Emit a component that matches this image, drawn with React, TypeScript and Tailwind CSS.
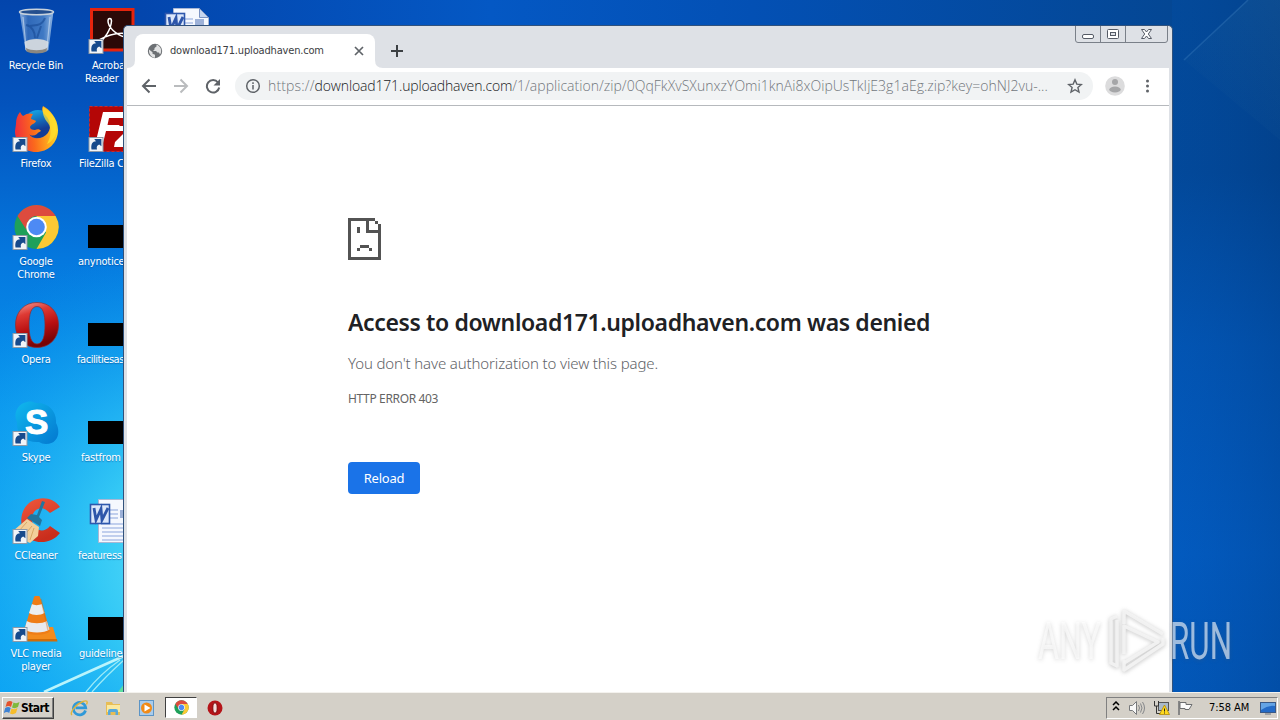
import type { ReactNode } from 'react'

const PAGE_FONT = "font-['Noto_Sans',sans-serif]"

function ShortcutArrow() {
  return (
    <g>
      <rect x="1" y="31.5" width="14" height="14" fill="#f1f4f8" stroke="#8e9aa8" />
      <path d="M3.500 43.500c-.8-5.500 1-8 4.500-8.200l-1.800-2.200h7.200v7.200l-2.200-1.900c-2 .6-3 2.500-2.200 5.100z" fill="#174a8c" />
    </g>
  )
}

function IconFrame({ children, shortcut = true }: { children: ReactNode; shortcut?: boolean }) {
  return (
    <svg width="48" height="48" viewBox="0 0 48 48" className="block shrink-0 [text-shadow:none]">
      {children}
      {shortcut && <ShortcutArrow />}
    </svg>
  )
}

function RecycleBinIcon() {
  return (
    <IconFrame shortcut={false}>
      <defs>
        <linearGradient id="bin" x2="1">
          <stop offset="0" stopColor="#8db2e2" />
          <stop offset=".25" stopColor="#2f68b8" />
          <stop offset=".7" stopColor="#3f79c4" />
          <stop offset="1" stopColor="#8fb5e2" />
        </linearGradient>
      </defs>
      <path d="M7.500 3h34l-5 39c-3 3.500-20 3.500-23 0z" fill="url(#bin)" />
      <path d="M12.500 34c5-4 19-4 24 0l-1 8c-3 3-19 3-22 0z" fill="#ccd4dd" />
      <path d="M14 40c5 3 16 3 21 0l-.5 3.500c-4 2.500-16 2.500-20 0z" fill="#8b8780" />
      <path d="M14 17c6 1 9 7 9 13M33 10c-3 8-9 7-15 8M29 18l-4 12" fill="none" stroke="#174a95" strokeWidth="2" opacity=".6" />
      <path d="M11 9l3 30M38 9l-3 30" stroke="#d2e2f4" strokeWidth="1.200" opacity=".6" />
      <ellipse cx="24.500" cy="4" rx="17" ry="2.800" fill="#244f8e" stroke="#c8d2dc" strokeWidth="1.500" />
    </IconFrame>
  )
}

function FirefoxIcon() {
  return (
    <IconFrame>
      <defs>
        <linearGradient id="fox" x1="0" y1=".3" x2="1" y2=".2">
          <stop offset="0" stopColor="#f0303c" />
          <stop offset=".4" stopColor="#fb6a1c" />
          <stop offset=".8" stopColor="#ffb81f" />
          <stop offset="1" stopColor="#ffe62c" />
        </linearGradient>
        <linearGradient id="globe" x2=".3" y2="1">
          <stop offset="0" stopColor="#14b4f0" />
          <stop offset=".8" stopColor="#143c96" />
        </linearGradient>
      </defs>
      <circle cx="26" cy="18" r="14" fill="url(#globe)" />
      <path
        d="M4 18c0-5 1-8 4-12 1 2 2 3 3 4 4-3 7-3 10-2-1 2-2 3-2 5 2 1 4 1 5 2-1 3-5 3-6 6 0 2 2 3 5 3 2-1 5-1 6 1-1 1-3 1-4 3-3 2-6 2-8 0 3 5 9 5 14 3 8-4 9-13 4-20-4-4-6-7-4-11C37 3 46 12 46 24c0 13-10 22-22 22C12 46 3 37 3 25z"
        fill="url(#fox)"
      />
      <path d="M31 1c9 5 15 14 13 25-1 6-5 10-9 12 4-7 5-15 1-21-4-5-6-9-5-16z" fill="#ffe22e" opacity=".75" />
    </IconFrame>
  )
}

function ChromeGlyph() {
  return (
    <>
      <circle cx="24.500" cy="23" r="22" fill="#1ea05a" />
      <path d="M24.500 12h19.100A22 22 0 0 1 24.500 45l9.500-16.500z" fill="#fcc934" />
      <path d="M5.500 12A22 22 0 0 1 43.600 12H24.500c-6 0-10 5-10 14z" fill="#dd4b3e" />
      <circle cx="24.500" cy="23" r="10.300" fill="#fff" />
      <circle cx="24.500" cy="23" r="8.300" fill="#4d8af4" />
    </>
  )
}

function OperaIcon() {
  return (
    <IconFrame>
      <defs>
        <linearGradient id="opera" x2=".3" y2="1">
          <stop offset="0" stopColor="#f4a39c" />
          <stop offset=".3" stopColor="#de3a34" />
          <stop offset=".65" stopColor="#b80f10" />
          <stop offset="1" stopColor="#780405" />
        </linearGradient>
      </defs>
      <path
        d="M25 .5C38 .5 46.500 10 46.500 23S38 45.500 25 45.500 3.500 36 3.500 23 12 .5 25 .5zm0 4c-6 0-8 8-8 18.500s2 19 8 19 8-8.500 8-19-2-18.500-8-18.500z"
        fill="url(#opera)"
        stroke="#8d2b31"
        strokeWidth=".7"
        fillRule="evenodd"
      />
    </IconFrame>
  )
}

function SkypeIcon() {
  return (
    <IconFrame>
      <defs>
        <linearGradient id="skype" x2="1" y2="1">
          <stop offset="0" stopColor="#10b8ee" />
          <stop offset="1" stopColor="#0378d0" />
        </linearGradient>
      </defs>
      <path d="M15 2c4-1 6 0 9 1 12-1 21 8 20 20 5 9 2 21-10 21-3 0-5-1-7-2C14 43 4 35 5 22 1 14 5 4 15 2z" fill="url(#skype)" />
      <text x="24.500" y="34" textAnchor="middle" fontFamily="Liberation Sans, sans-serif" fontWeight="700" fontSize="35" fill="#fff" stroke="#fff">
        S
      </text>
    </IconFrame>
  )
}

function CCleanerIcon() {
  return (
    <IconFrame>
      <defs>
        <linearGradient id="ccl" x2=".4" y2="1">
          <stop offset="0" stopColor="#f0583d" />
          <stop offset="1" stopColor="#c92d1c" />
        </linearGradient>
      </defs>
      <path d="M48 9C42 0 30-2 20 3 6 11 6 32 18 41c10 6 23 3 30-6l-10-7c-4 5-10 6-14 2-6-5-5-14 0-18 5-3 9-2 14 3z" fill="url(#ccl)" />
      <path d="M15 21l12 8-1 9-8 7-9-4-8-8z" fill="#f2cf9a" />
      <path d="M6 34l9-10M11 39l9-11M18 42l4-12" stroke="#d9a763" strokeWidth="1" />
      <path d="M30 3l3 1-6 15 3 3-2 6-13-8 4-4 6 1z" fill="#21769f" />
    </IconFrame>
  )
}

function VlcIcon() {
  return (
    <IconFrame>
      <path d="M10 31h31l4 14H5z" fill="#f38b1c" />
      <path d="M5 43h40l.5 2.500H5z" fill="#d06c08" />
      <path d="M22 1c1-2 5-2 6 0l10 34c-3 5-23 5-26 0z" fill="#ef7d16" />
      <path d="M20 8c2 1.500 7 1.500 9.700 0l2.800 9c-4 2.500-12 2.500-15.500 0z" fill="#eceef0" />
      <path d="M14.800 25c5 3 15.500 3 20 0l2.700 8.500c-5 4-20 4-25 0z" fill="#e8eaed" />
      <path d="M29 3l7 31" stroke="#c86207" strokeWidth="1.500" opacity=".35" />
    </IconFrame>
  )
}

function AcrobatIcon() {
  return (
    <IconFrame>
      <rect x="3.500" y="1.500" width="41.500" height="40.500" fill="#2b0907" stroke="#e5240d" strokeWidth="3" />
      <path
        d="M10 36c7-5 13-15 13.500-23 0-3.500-3.500-3.500-3.500 0 0 6 8 14 17 16 4 .5 4-3 0-3.500-9-1-18 2-26 6.500-3 1.500-3 4-1 4z"
        fill="none"
        stroke="#fff"
        strokeWidth="1.500"
      />
    </IconFrame>
  )
}

function FileZillaIcon() {
  return (
    <IconFrame>
      <rect x="1.500" y=".5" width="45" height="45" fill="#b40606" stroke="#d12724" strokeDasharray="3 2" />
      <path d="M15 6h26l-1.500 6H21l-1.500 7h12l-1.500 6H18l-3.500 14H7z" fill="#fff" />
      <path d="M30 20h17l-1 5-11 11h10l-1 5H26l1-5 11-11h-9z" fill="#fff" />
    </IconFrame>
  )
}

function BlackIcon() {
  return (
    <IconFrame shortcut={false}>
      <rect y="21" width="48" height="23" fill="#000" />
    </IconFrame>
  )
}

function WordIcon() {
  return (
    <IconFrame shortcut={false}>
      <path d="M10.500 1.500h26l9 9v34h-35z" fill="#f5f8fe" stroke="#a9b7d4" />
      <path d="M36.500 1.500v9h9z" fill="#c6d5ee" stroke="#7b93c2" />
      <path d="M22 12h8M22 16h8M22 20h8M14 26h29M14 30h29M14 34h29M14 38h29M14 42h29" stroke="#8ba5dc" />
      <rect x="32" y="12" width="9" height="8" fill="#9db1d8" />
      <rect x="2.500" y="6.500" width="19" height="19" fill="#dce7fa" stroke="#2e58ad" strokeWidth="1.600" />
      <path d="M6 10l2 12 5-11 1 11 6-12" fill="none" stroke="#2e56aa" strokeWidth="2.800" />
    </IconFrame>
  )
}

const leftColumn = [
  { label: ['Recycle Bin'], icon: <RecycleBinIcon /> },
  { label: ['Firefox'], icon: <FirefoxIcon /> },
  { label: ['Google', 'Chrome'], icon: <IconFrame><ChromeGlyph /></IconFrame> },
  { label: ['Opera'], icon: <OperaIcon /> },
  { label: ['Skype'], icon: <SkypeIcon /> },
  { label: ['CCleaner'], icon: <CCleanerIcon /> },
  { label: ['VLC media', 'player'], icon: <VlcIcon /> },
]

const rightColumn = [
  { label: ['Acroba', 'Reader'], indent: ['pl-[20px]', 'pl-[13px]'], icon: <AcrobatIcon /> },
  { label: ['FileZilla C'], indent: ['pl-[7px]'], icon: <FileZillaIcon /> },
  { label: ['anynotice'], indent: ['pl-[6px]'], icon: <BlackIcon /> },
  { label: ['facilitiesas'], indent: ['pl-[5px] tracking-[-0.45px]'], icon: <BlackIcon /> },
  { label: ['fastfrom'], indent: ['pl-[9px]'], icon: <BlackIcon /> },
  { label: ['featuress'], indent: ['pl-[6px]'], icon: <WordIcon /> },
  { label: ['guideline'], indent: ['pl-[7px]'], icon: <BlackIcon /> },
]

function Wallpaper() {
  return (
    <svg width="1280" height="692" className="absolute inset-0">
      <defs>
        <linearGradient id="leftSky" x1="0" y1="0" x2="0" y2="1">
          <stop offset="0" stopColor="#0345ac" />
          <stop offset=".15" stopColor="#0353bd" />
          <stop offset=".38" stopColor="#0579df" />
          <stop offset=".6" stopColor="#0895ee" />
          <stop offset="1" stopColor="#06a0f4" />
        </linearGradient>
        <radialGradient id="glow" gradientUnits="userSpaceOnUse" cx="210" cy="560" r="330">
          <stop offset="0" stopColor="#6ae7fb" />
          <stop offset=".35" stopColor="#3bd0f6" stopOpacity=".85" />
          <stop offset="1" stopColor="#0a9bf0" stopOpacity="0" />
        </radialGradient>
        <linearGradient id="rightSky" x1="0" y1="0" x2="0" y2="1">
          <stop offset="0" stopColor="#04448f" />
          <stop offset=".25" stopColor="#03438f" />
          <stop offset=".5" stopColor="#0352ae" />
          <stop offset=".8" stopColor="#0359bd" />
          <stop offset="1" stopColor="#0355b4" />
        </linearGradient>
        <linearGradient id="rightShade" gradientUnits="userSpaceOnUse" x1="1172" y1="0" x2="1280" y2="0">
          <stop offset="0" stopColor="#0060c8" stopOpacity=".2" />
          <stop offset="1" stopColor="#003e88" stopOpacity=".3" />
        </linearGradient>
        <linearGradient id="topSky" x2="1">
          <stop offset="0" stopColor="#0345ac" />
          <stop offset=".35" stopColor="#0458c4" />
          <stop offset=".6" stopColor="#0350b4" />
          <stop offset="1" stopColor="#044794" />
        </linearGradient>
        <linearGradient id="beam" x1="1" y1="0" x2=".4" y2="1">
          <stop offset="0" stopColor="#2a6a9c" stopOpacity=".25" />
          <stop offset="1" stopColor="#2a6a9c" stopOpacity="0" />
        </linearGradient>
      </defs>
      <rect width="640" height="692" fill="url(#leftSky)" />
      <rect width="640" height="692" fill="url(#glow)" />
      <rect x="640" width="640" height="692" fill="url(#rightSky)" />
      <rect x="1172" width="108" height="692" fill="url(#rightShade)" />
      <rect x="124" width="1048" height="30" fill="url(#topSky)" />
      <path d="M1184 60L1248 0h32v140z" fill="url(#beam)" />
      <path d="M1184 60L1248 0" stroke="#4a8ac6" strokeWidth="1.500" opacity=".3" />
      <path d="M44 692q35-16 80-36" fill="none" stroke="#b9f4fc" strokeWidth="2.500" />
      <path d="M86 692q14-18 34-32M92 692q14-16 32-32" fill="none" stroke="#9cebf8" strokeWidth="1.300" />
      <path d="M118 692l6-8v8z" fill="#5de0a0" />
    </svg>
  )
}

function DesktopIcons() {
  return (
    <div className="relative flex text-[11px] leading-[13px] text-white font-['DejaVu_Sans_Condensed','Noto_Sans',sans-serif] tracking-[-0.25px] [text-shadow:0_1px_1px_#00408a80]">
      <div className="w-[72px]">
        {leftColumn.map((item) => (
          <div key={item.label[0]} className="flex h-[98px] flex-col items-center pt-[8px]">
            {item.icon}
            <div className="mt-[3px] text-center whitespace-nowrap">
              {item.label.map((line) => (
                <div key={line}>{line}</div>
              ))}
            </div>
          </div>
        ))}
      </div>
      <div className="w-[52px]">
        {rightColumn.map((item) => (
          <div key={item.label[0]} className="flex h-[98px] flex-col pt-[8px]">
            <div className="pl-[16px]">{item.icon}</div>
            <div className="mt-[3px] whitespace-nowrap">
              {item.label.map((line, i) => (
                <div key={line} className={item.indent[i]}>
                  {line}
                </div>
              ))}
            </div>
          </div>
        ))}
      </div>
      <div className="pt-[7px] pl-[39px]">
        <WordIcon />
      </div>
    </div>
  )
}

function CaptionButtons() {
  return (
    <svg width="94" height="18" viewBox="0 0 94 18" className="shrink-0 self-start" fill="none">
      <path d="M.5 0v14q0 2.500 2.500 2.500h87q2.500 0 2.500-2.500V0M25.500 0v16M50.500 0v16" stroke="#7a8089" />
      <rect x="7.500" y="8.500" width="11" height="4" rx="1.500" fill="#fff" stroke="#555b66" />
      <rect x="32.500" y="3.500" width="11" height="9" rx="1" fill="#fff" stroke="#555b66" />
      <rect x="35.500" y="6.500" width="5" height="3" fill="#dee1e6" stroke="#555b66" />
      <path d="M66.500 3.500h3l2 2.500 2-2.500h3l-3.200 4.500 3.200 4.500h-3l-2-2.500-2 2.500h-3l3.200-4.500z" fill="#fff" stroke="#555b66" />
    </svg>
  )
}

function TabStrip() {
  return (
    <div className="flex h-[42px] items-end bg-[#dee1e6]">
      <svg width="8" height="8" className="shrink-0">
        <path d="M8 0v8H0q8 0 8-8z" fill="#fff" />
      </svg>
      <div className="flex h-[34px] w-[240px] items-center rounded-t-[8px] bg-white pr-[10px] pl-[12px]">
        <svg width="16" height="16" viewBox="0 0 16 16">
          <circle cx="8" cy="8" r="7.200" fill="#6c7074" />
          <path d="M2 6.500l3.500 2.700v1.500l2.500 1v3C4.500 14.500 1.500 11 2 6.500zM9.500 1.500v2L7.500 5v1.500L6 8h3l1.500 1.500H12l1 2C15 9 15 4 9.500 1.500z" fill="#fff" opacity=".8" />
        </svg>
        <span className="ml-[7px] flex-1 pt-[1px] text-[11px] whitespace-nowrap text-[#3c4043] font-['DejaVu_Sans_Condensed','Noto_Sans',sans-serif] tracking-[-0.17px]">
          download171.uploadhaven.com
        </span>
        <svg width="12" height="12" viewBox="0 0 12 12">
          <path d="M2 2l8 8M10 2l-8 8" stroke="#5f6368" strokeWidth="1.700" />
        </svg>
      </div>
      <svg width="8" height="8" className="shrink-0">
        <path d="M0 0v8h8q-8 0-8-8z" fill="#fff" />
      </svg>
      <svg width="14" height="14" viewBox="0 0 14 14" className="mb-[10px] ml-[7px]">
        <path d="M7 1v12M1 7h12" stroke="#3c4043" strokeWidth="2" />
      </svg>
      <div className="flex-1" />
      <CaptionButtons />
    </div>
  )
}

function Toolbar() {
  return (
    <div className="flex h-[38px] items-center border-b border-[#b6b9bd] bg-white pb-[1px] pl-[14px]">
      <svg width="16" height="16" viewBox="0 0 16 16" fill="none" stroke="#5f6368" strokeWidth="2">
        <path d="M15 8H2.500M8.500 1.500L2 8l6.500 6.500" />
      </svg>
      <svg width="16" height="16" viewBox="0 0 16 16" fill="none" stroke="#babcbe" strokeWidth="2" className="ml-[16px]">
        <path d="M1 8h12.500M7.500 1.500L14 8l-6.500 6.500" />
      </svg>
      <svg width="16" height="16" viewBox="0 0 16 16" className="ml-[16px]">
        <path d="M13 4.500A6.200 6.200 0 1 0 14.200 9.500" fill="none" stroke="#5f6368" strokeWidth="2" />
        <path d="M15 1v6.500H8.500z" fill="#5f6368" />
      </svg>
      <div className="ml-[14px] flex h-[28px] w-[858px] items-center rounded-full bg-[#f1f3f4] pr-[10px] pl-[10px]">
        <svg width="16" height="16" viewBox="0 0 16 16">
          <circle cx="8" cy="8" r="6.300" fill="none" stroke="#5f6368" strokeWidth="1.500" />
          <path d="M8 7v4.500M8 4.300v1.600" stroke="#5f6368" strokeWidth="1.500" />
        </svg>
        <div className="ml-[7px] flex-1 pb-[1px] text-[14px] font-light whitespace-nowrap text-[#72777c] font-['Open_Sans','Noto_Sans',sans-serif]">
          <span className="tracking-[0.15px]">https://</span>
          <span className="tracking-[-0.15px] text-[#202124]">download171.uploadhaven.com</span>
          <span className="tracking-[0.03px]">/1/application/zip/0QqFkXvSXunxzYOmi1knAi8xOipUsTkIjE3g1aEg.zip?key=ohNJ2vu-...</span>
        </div>
        <svg width="16" height="16" viewBox="0 0 16 16">
          <path d="M8 1.800l1.800 4.300 4.600.4-3.500 3 1.100 4.600L8 11.700l-4 2.400 1.100-4.600-3.500-3 4.600-.4z" fill="none" stroke="#5f6368" strokeWidth="1.400" />
        </svg>
      </div>
      <svg width="20" height="20" viewBox="0 0 20 20" className="ml-[12px]">
        <circle cx="10" cy="10" r="9.800" fill="#dcdcdd" />
        <circle cx="10" cy="6" r="3" fill="#a5a6a8" />
        <ellipse cx="10" cy="13.500" rx="5.700" ry="3" fill="#a5a6a8" />
      </svg>
      <svg width="4" height="16" viewBox="0 0 4 16" fill="#5f6368" className="ml-[20px]">
        <circle cx="2.500" cy="3" r="1.500" />
        <circle cx="2.500" cy="8" r="1.500" />
        <circle cx="2.500" cy="13" r="1.500" />
      </svg>
    </div>
  )
}

function ErrorPage() {
  return (
    <div className={`flex flex-1 flex-col items-start bg-white pt-[112px] pl-[221px] ${PAGE_FONT}`}>
      <svg width="33" height="42" viewBox="0 0 11 14" fill="#535353" shapeRendering="crispEdges">
        <path d="M0 0h9v1H7v3h3V2h1v12H0zM1 1v12h9V5H6V1z" fillRule="evenodd" />
        <path d="M9 1h1v1H9zM3 3h1v2H3zM4 9h3v1H4zM3 10h1v1H3zM7 10h1v1H7z" />
      </svg>
      <h1 className="mt-[47px] text-[23px] leading-[30px] font-semibold tracking-[-0.37px] whitespace-nowrap text-[#202124]">
        Access to download171.uploadhaven.com was denied
      </h1>
      <p className="mt-[14px] text-[15px] leading-[24px] font-light tracking-[-0.13px] whitespace-nowrap text-[#5f6368]">
        You don't have authorization to view this page.
      </p>
      <p className="mt-[14px] text-[12px] leading-[20px] tracking-[-0.35px] whitespace-nowrap text-[#646464]">HTTP ERROR 403</p>
      <button className="mt-[53px] h-[32px] w-[72px] rounded-[4px] bg-[#1a73e8] pt-[1px] text-[13px] tracking-[-0.2px] text-white">Reload</button>
    </div>
  )
}

function Watermark() {
  return (
    <svg
      width="210"
      height="80"
      viewBox="0 0 210 80"
      className="absolute top-[602px] left-[1030px] overflow-visible [filter:drop-shadow(0_1px_2px_rgba(90,90,90,0.4))]"
    >
      <g fontFamily="Roboto, sans-serif" fontSize="51" fill="#fff" fillOpacity=".6">
        <text x="8" y="57" textLength="63" lengthAdjust="spacingAndGlyphs">ANY</text>
        <text x="140" y="57" textLength="62" lengthAdjust="spacingAndGlyphs">RUN</text>
      </g>
      <g fill="none" stroke="#f4f4f4" strokeOpacity=".9" strokeWidth="3.500" strokeLinejoin="round">
        <path d="M94 22V9l39 23M94 52V24l34 16-34 21M87 14l-6 3v44l6 3V18" />
        <path d="M94 58v10l39-26v-6" />
      </g>
    </svg>
  )
}

function BrowserWindow() {
  return (
    <div className="absolute top-[25px] left-[123px] flex h-[667px] w-[1050px] flex-col rounded-t-[5px] border-x border-t border-[#31527c] bg-[#dee1e6] px-[3px]">
      <TabStrip />
      <Toolbar />
      <ErrorPage />
    </div>
  )
}

function Taskbar() {
  return (
    <div className="relative flex h-[28px] items-center border-t border-[#f4f2ee] bg-[#d4d0c8] pt-[2px] pr-[2px] pl-[2px]">
      <div className="flex h-[22px] w-[52px] items-center border border-t-white border-r-[#404040] border-b-[#404040] border-l-white pl-[1px] shadow-[inset_-1px_-1px_0_#808080]">
        <svg width="17" height="17" viewBox="0 0 17 17" className="shrink-0">
          <path d="M3 3q3-2 5.500 0L7 8Q4.500 6 1.500 8z" fill="#e5532d" />
          <path d="M9.500 3.500q3 1.500 6-.5l-1.500 5q-3 2-6 .5z" fill="#7fb93c" />
          <path d="M1.200 9q3-2 5.500 0l-1.500 5Q3 12-.2 14z" fill="#3f83d4" />
          <path d="M7.500 9.500q3 1.500 6-.5L12 14q-3 2-6 .5z" fill="#f6bd2b" />
        </svg>
        <span className="text-[12px] leading-none font-bold text-black font-['DejaVu_Sans_Condensed',sans-serif] tracking-[-0.6px]">Start</span>
      </div>
      <svg width="18" height="18" viewBox="0 0 18 18" className="ml-[16px]">
        <path d="M15.500 11.500A6.200 6.200 0 1 1 15.700 8.800H5.500" fill="none" stroke="#3099d8" strokeWidth="2.700" />
        <path d="M2 16C-1 14 6 5 13 2.500c4-1.500 5 0 3.500 3" fill="none" stroke="#e0b43a" strokeWidth="1.400" />
      </svg>
      <svg width="18" height="18" viewBox="0 0 18 18" className="ml-[16px]">
        <path d="M2 3h6l1 2h7v11H2z" fill="#e7bd55" />
        <path d="M3 6h13v7H3z" fill="#fbe9a0" />
        <path d="M4 16V12q0-2 2-2h6q2 0 2 2v4h-2.500v-3h-5v3z" fill="#58a9d9" />
      </svg>
      <svg width="18" height="18" viewBox="0 0 18 18" className="ml-[16px]">
        <rect x="1.500" y="1.500" width="14" height="15" fill="#a9ccec" stroke="#5b94c6" />
        <circle cx="8.500" cy="9" r="5.500" fill="#f18a16" />
        <path d="M6.500 5.500v7l6-3.500z" fill="#fff" />
      </svg>
      <div className="ml-[9px] flex h-[21px] w-[32px] items-center justify-center border border-t-[#404040] border-r-white border-b-white border-l-[#404040] bg-white">
        <svg width="15" height="15" viewBox="2 0 45 46">
          <ChromeGlyph />
        </svg>
      </div>
      <svg width="16" height="16" viewBox="0 0 16 16" className="ml-[10px]">
        <circle cx="8" cy="8" r="7.500" fill="#b51419" />
        <ellipse cx="8" cy="8" rx="2.200" ry="5.200" fill="#f4dedd" stroke="#7e090c" />
      </svg>
      <div className="flex-1" />
      <div className="flex h-[22px] w-[172px] items-center border border-t-[#808080] border-r-white border-b-white border-l-[#808080] pl-[5px]">
        <svg width="8" height="10" viewBox="0 0 8 10" fill="none" stroke="#000" strokeWidth="1.500" className="mb-[3px]">
          <path d="M1 4l3-3 3 3M1 9l3-3 3 3" />
        </svg>
        <svg width="18" height="16" viewBox="0 0 18 16" className="ml-[8px]" fill="none">
          <path d="M1.500 5.500h3l4-4v13l-4-4h-3z" fill="#f8f8f8" stroke="#77797c" />
          <path d="M10.500 5q2 3 0 6M12.500 3.500q3 4.500 0 9M14.500 2q4 6 0 12" stroke="#85878a" />
        </svg>
        <svg width="18" height="16" viewBox="0 0 18 16" className="ml-[7px]">
          <rect x="5.500" y="2.500" width="10" height="8" fill="#a9b9c9" stroke="#555" />
          <path d="M1.500 1v5h4V1M3.500 6v7.500h5" fill="none" stroke="#333" />
          <path d="M11.500 5l5 9.500h-10z" fill="#ffd91c" stroke="#b28a05" strokeWidth=".8" />
          <path d="M11.500 8.500v3M11.500 12.500v1" stroke="#222" />
        </svg>
        <svg width="17" height="16" viewBox="0 0 17 16" className="ml-[6px]">
          <path d="M2 1v14" stroke="#6c6e70" strokeWidth="1.500" />
          <path d="M3 2.500h6v2h6l-3 5H8v-1H3z" fill="#fbfbfb" stroke="#6c6e70" />
        </svg>
        <span className="ml-[15px] text-[11px] leading-none whitespace-nowrap text-black font-['DejaVu_Sans_Condensed','Noto_Sans',sans-serif] tracking-[-0.05px]">7:58 AM</span>
        <svg width="16" height="14" viewBox="0 0 16 14" className="ml-auto mr-[1px]">
          <rect x=".5" y="1.500" width="15" height="10" fill="#246bc7" stroke="#395987" />
          <path d="M1 2h14v3Q8 4 1 9z" fill="#64a4e5" />
          <path d="M5 13h6" stroke="#6a7280" />
        </svg>
      </div>
    </div>
  )
}

export default function App() {
  return (
    <div className="relative flex h-[720px] w-[1280px] flex-col overflow-hidden bg-[#0450b0]">
      <div className="relative h-[692px]">
        <Wallpaper />
        <DesktopIcons />
        <BrowserWindow />
        <Watermark />
      </div>
      <Taskbar />
    </div>
  )
}
